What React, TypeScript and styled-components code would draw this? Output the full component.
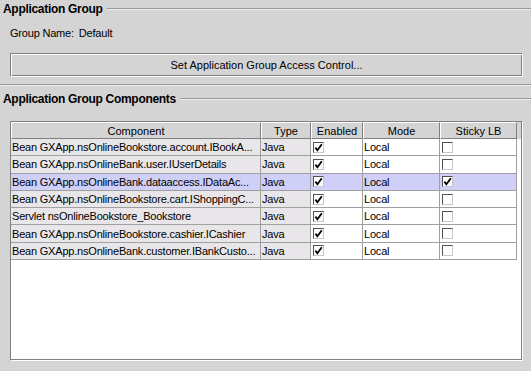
import styled, { createGlobalStyle } from "styled-components";

const GlobalStyle = createGlobalStyle`
  html, body {
    margin: 0;
    padding: 0;
    background: #d4d4d4;
  }
  body {
    font-family: "Liberation Sans", Arial, sans-serif;
    font-size: 11px;
    color: #000;
  }
`;

interface Row {
  component: string;
  type: string;
  enabled: boolean;
  mode: string;
  sticky: boolean;
  selected?: boolean;
}

const ROWS: Row[] = [
  { component: "Bean GXApp.nsOnlineBookstore.account.IBookA...", type: "Java", enabled: true, mode: "Local", sticky: false },
  { component: "Bean GXApp.nsOnlineBank.user.IUserDetails", type: "Java", enabled: true, mode: "Local", sticky: false },
  { component: "Bean GXApp.nsOnlineBank.dataaccess.IDataAc...", type: "Java", enabled: true, mode: "Local", sticky: true, selected: true },
  { component: "Bean GXApp.nsOnlineBookstore.cart.IShoppingC...", type: "Java", enabled: true, mode: "Local", sticky: false },
  { component: "Servlet nsOnlineBookstore_Bookstore", type: "Java", enabled: true, mode: "Local", sticky: false },
  { component: "Bean GXApp.nsOnlineBookstore.cashier.ICashier", type: "Java", enabled: true, mode: "Local", sticky: false },
  { component: "Bean GXApp.nsOnlineBank.customer.IBankCusto...", type: "Java", enabled: true, mode: "Local", sticky: false },
];

const COLUMNS = ["Component", "Type", "Enabled", "Mode", "Sticky LB"];

const CheckBox = ({ checked }: { checked: boolean }) => (
  <StBox>
    {checked && (
      <svg width="9" height="9" viewBox="0 0 9 9">
        <path d="M1.4 4.6 L3.4 7.2 L7.8 1.2" fill="none" stroke="#000" strokeWidth="1.8" />
      </svg>
    )}
  </StBox>
);

const App = () => {
  return (
    <StPage>
      <GlobalStyle />
      <StTitleRow>
        <StTitle>Application Group</StTitle>
        <StTitleLine />
      </StTitleRow>
      <StGroupName>
        Group Name:<StValue>Default</StValue>
      </StGroupName>
      <StButton>Set Application Group Access Control...</StButton>
      <StSeparator />
      <StTitleRow $top={4}>
        <StTitle>Application Group Components</StTitle>
        <StTitleLine />
      </StTitleRow>
      <StScrollPane>
        <StHeader>
          {COLUMNS.map((c) => (
            <StHeaderCell key={c}>{c}</StHeaderCell>
          ))}
        </StHeader>
        {ROWS.map((r) => (
          <StRow key={r.component} $selected={r.selected}>
            <StCell $readOnly={!r.selected}>{r.component}</StCell>
            <StCell $readOnly={!r.selected}>{r.type}</StCell>
            <StCell>
              <CheckBox checked={r.enabled} />
            </StCell>
            <StCell>{r.mode}</StCell>
            <StCell>
              <CheckBox checked={r.sticky} />
            </StCell>
          </StRow>
        ))}
      </StScrollPane>
    </StPage>
  );
};

export default App;

const GRID = "250px 50px 52px 77px 77px";

const StPage = styled.div`
  width: 531px;
  height: 371px;
  overflow: hidden;
`;
const StTitleRow = styled.div<{ $top?: number }>`
  display: flex;
  align-items: center;
  height: 18px;
  margin-top: ${({ $top }) => $top ?? 0}px;
  padding-left: 3px;
`;
const StTitle = styled.span`
  font-size: 12px;
  font-weight: bold;
  letter-spacing: -0.3px;
  white-space: nowrap;
`;
const StTitleLine = styled.div`
  flex: 1;
  margin-left: 4px;
  border-top: 1px solid #9a9a9a;
  border-bottom: 1px solid #ececec;
`;
const StGroupName = styled.div`
  display: flex;
  align-items: center;
  height: 18px;
  margin-top: 6px;
  padding-left: 10px;
  letter-spacing: -0.2px;
`;
const StValue = styled.span`
  margin-left: 5px;
`;
const StButton = styled.button`
  display: block;
  box-sizing: border-box;
  width: 513px;
  height: 24px;
  margin: 11px 0 0 10px;
  padding: 0;
  font-family: "Liberation Sans", Arial, sans-serif;
  font-size: 11px;
  color: #000;
  background: #d4d4d4;
  border: 1px solid #808080;
  border-right-color: #fff;
  border-bottom-color: #fff;
  box-shadow: inset 1px 1px 0 #fff, inset -1px -1px 0 #808080;
`;
const StSeparator = styled.div`
  margin-top: 7px;
  border-top: 1px solid #9a9a9a;
  border-bottom: 1px solid #ececec;
`;
const StScrollPane = styled.div`
  box-sizing: border-box;
  width: 513px;
  height: 240px;
  margin: 13px 0 0 10px;
  background: #fff;
  border: 1px solid #808080;
  border-right-color: #fff;
  border-bottom-color: #fff;
  box-shadow: inset -1px -1px 0 #808080;
`;
const StHeader = styled.div`
  display: grid;
  grid-template-columns: ${GRID} 1fr;
  height: 17px;
  background: #d4d4d4;
  &::after {
    content: "";
    border-right: 1px solid #808080;
  }
`;
const StHeaderCell = styled.div`
  box-sizing: border-box;
  display: flex;
  align-items: center;
  justify-content: center;
  border-top: 1px solid #fff;
  border-left: 1px solid #fff;
  border-right: 1px solid #808080;
  border-bottom: 1px solid #808080;
  white-space: nowrap;
`;
const StRow = styled.div<{ $selected?: boolean }>`
  display: grid;
  grid-template-columns: ${GRID};
  height: 17.3px;
  background: ${({ $selected }) => ($selected ? "#cfcff7" : "#fff")};
  width: max-content;
`;
const StCell = styled.div<{ $readOnly?: boolean }>`
  box-sizing: border-box;
  display: flex;
  align-items: center;
  padding-left: 1px;
  border-right: 1px solid #a0a0a0;
  border-bottom: 1px solid #a0a0a0;
  white-space: nowrap;
  overflow: hidden;
  letter-spacing: -0.2px;
  background: ${({ $readOnly }) => ($readOnly ? "#e8e6e8" : "transparent")};
`;
const StBox = styled.div`
  box-sizing: border-box;
  width: 11px;
  height: 11px;
  margin-left: 1px;
  display: flex;
  align-items: center;
  justify-content: center;
  background: #fff;
  border: 1px solid #505050;
  border-right-color: #c8c8c8;
  border-bottom-color: #c8c8c8;
`;
